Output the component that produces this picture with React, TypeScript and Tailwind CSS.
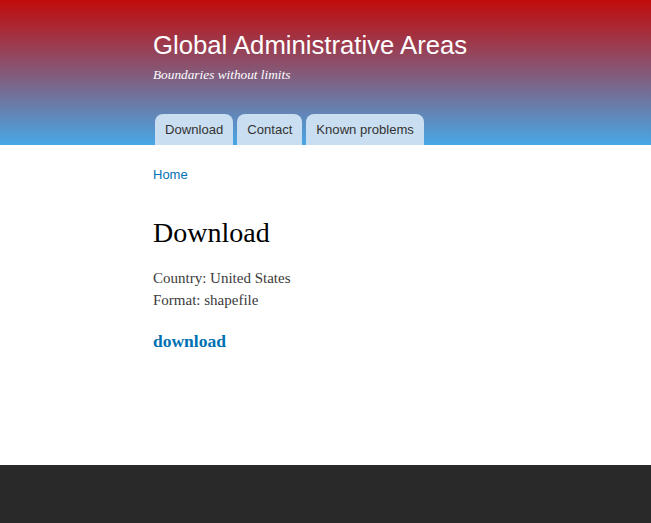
export default function App() {
  const tabs = ["Download", "Contact", "Known problems"];

  return (
    <div className="flex min-h-[523px] flex-col bg-white">
      <header className="h-[145px] bg-[linear-gradient(to_bottom,#c10b0b,#48a7e5)]">
        <div className="flex h-full flex-col pl-[153px]">
          <h1 className="mt-[29px] font-['Liberation_Sans',Arial,sans-serif] text-[25.7px] leading-[32px] text-white">
            Global Administrative Areas
          </h1>
          <p className="mt-[5px] font-['Liberation_Serif','DejaVu_Serif',serif] text-[13.3px] italic leading-[18px] text-white">
            Boundaries without limits
          </p>
          <nav className="mt-auto flex gap-1 pl-[2px]">
            {tabs.map((tab) => (
              <a
                key={tab}
                href="#"
                className="flex h-[31px] items-center rounded-t-[8px] bg-[#c9def0] px-[10px] font-['Liberation_Sans',Arial,sans-serif] text-[13.1px] text-[#333]"
              >
                {tab}
              </a>
            ))}
          </nav>
        </div>
      </header>
      <main className="flex-1 pl-[153px] pt-[16px]">
        <a
          href="#"
          className="font-['Liberation_Sans',Arial,sans-serif] text-[13px] leading-[16px] text-[#0071b3]"
        >
          Home
        </a>
        <h2 className="mt-[30px] font-['Liberation_Serif',serif] text-[28px] leading-[36px] text-black">
          Download
        </h2>
        <div className="mt-[16px] font-['Liberation_Serif',serif] text-[15px] leading-[22px] text-[#3b3b3b]">
          <p>Country: United States</p>
          <p>Format: shapefile</p>
        </div>
        <a
          href="#"
          className="mt-[19px] block font-['Liberation_Serif',serif] text-[17.5px] font-bold leading-[22px] text-[#0071b3]"
        >
          download
        </a>
      </main>
      <footer className="h-[58px] bg-[#292929]" />
    </div>
  );
}
